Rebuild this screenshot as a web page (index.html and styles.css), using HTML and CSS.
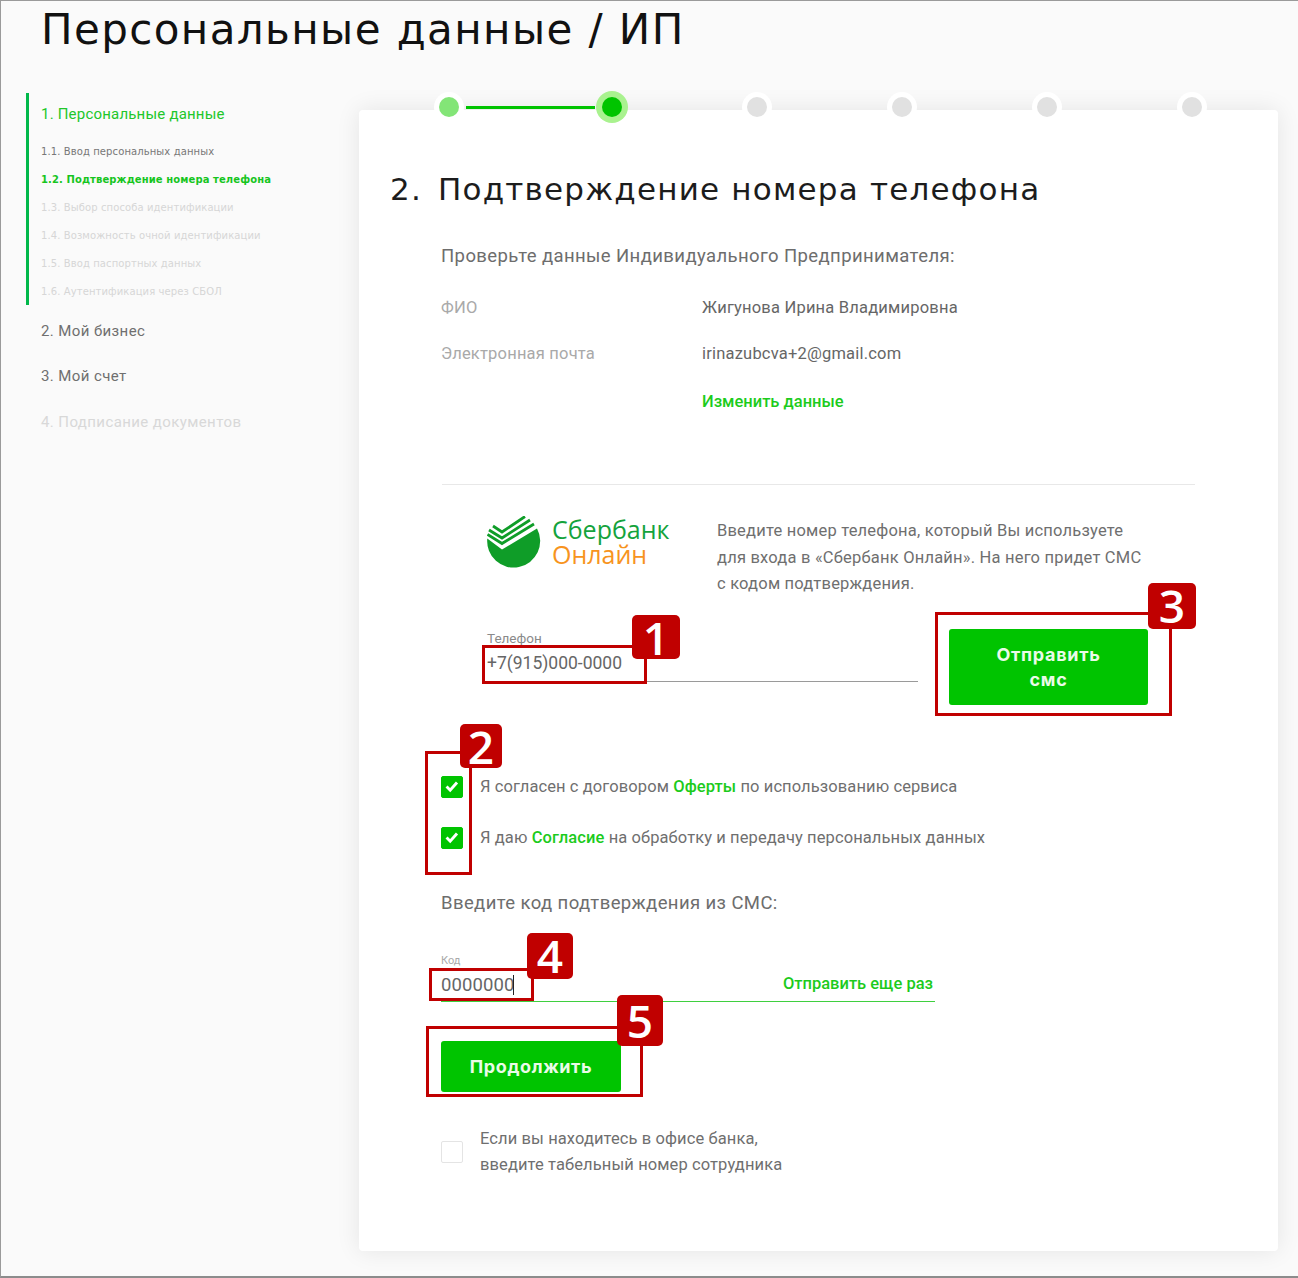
FILE: index.html
```html
<!DOCTYPE html>
<html lang="ru">
<head>
<meta charset="utf-8">
<title>Персональные данные / ИП</title>
<link rel="stylesheet" href="styles.css">
</head>
<body>
<div class="page">
  <h1 class="title">Персональные данные / ИП</h1>
  <div class="layout">
    <aside class="side">
      <div class="side-group">
        <div class="side-head">1. Персональные данные</div>
        <ul class="side-list">
          <li class="side-done">1.1. Ввод персональных данных</li>
          <li class="side-active">1.2. Подтверждение номера телефона</li>
          <li>1.3. Выбор способа идентификации</li>
          <li>1.4. Возможность очной идентификации</li>
          <li>1.5. Ввод паспортных данных</li>
          <li>1.6. Аутентификация через СБОЛ</li>
        </ul>
      </div>
      <div class="side-main side-m1">2. Мой бизнес</div>
      <div class="side-main side-m2">3. Мой счет</div>
      <div class="side-main side-m3">4. Подписание документов</div>
    </aside>

    <main class="card">
      <div class="stepper">
        <span class="dot dot-done"></span>
        <span class="link link-on"></span>
        <span class="dot dot-now"></span>
        <span class="link"></span>
        <span class="dot"></span>
        <span class="link"></span>
        <span class="dot"></span>
        <span class="link"></span>
        <span class="dot"></span>
        <span class="link"></span>
        <span class="dot"></span>
      </div>

      <h2 class="card-title"><span class="card-num">2.</span>Подтверждение номера телефона</h2>

      <div class="body">
        <p class="lead">Проверьте данные Индивидуального Предпринимателя:</p>
        <dl class="facts">
          <dt>ФИО</dt><dd>Жигунова Ирина Владимировна</dd>
          <dt>Электронная почта</dt><dd>irinazubcva+2@gmail.com</dd>
          <dt></dt><dd><a class="change">Изменить данные</a></dd>
        </dl>
        <hr class="rule">

        <div class="sber">
          <div class="logo">
            <svg class="logo-mark" width="56" height="52" viewBox="5 6 56 52">
              <path d="M5.300 28.500 20 39.500 55 18.500A26.500 26.500 0 1 1 5.300 28.500Z" fill="#0f9d28"/>
              <path d="M5.500 24.500 20 33.500 52 14" fill="none" stroke="#0f9d28" stroke-width="2.800"/>
              <path d="M7 20 20 28 48 10" fill="none" stroke="#0f9d28" stroke-width="2.800"/>
              <path d="M11 16 20 22 43 6.500" fill="none" stroke="#0f9d28" stroke-width="2.800"/>
            </svg>
            <div class="logo-text"><span class="logo-a">Сбербанк</span><span class="logo-b">Онлайн</span></div>
          </div>
          <p class="sber-text">Введите номер телефона, который Вы используете<br>для входа в «Сбербанк Онлайн». На него придет СМС<br>с кодом подтверждения.</p>
        </div>

        <div class="phone-row">
          <div class="field field-phone">
            <span class="field-label">Телефон</span>
            <span class="field-value phone-value">+7(915)000-0000</span>
          </div>
          <button class="btn btn-sms">Отправить<br>смс</button>
        </div>

        <div class="checks">
          <label class="check"><span class="box box-on"><svg width="22" height="22" viewBox="0 0 22 22"><path d="M5 10.500 9 14.500 16.500 6" fill="none" stroke="#fff" stroke-width="3.200"/></svg></span><span>Я согласен с договором <a class="lnk">Оферты</a> по использованию сервиса</span></label>
          <label class="check"><span class="box box-on"><svg width="22" height="22" viewBox="0 0 22 22"><path d="M5 10.500 9 14.500 16.500 6" fill="none" stroke="#fff" stroke-width="3.200"/></svg></span><span>Я даю <a class="lnk">Согласие</a> на обработку и передачу персональных данных</span></label>
        </div>

        <p class="lead code-lead">Введите код подтверждения из СМС:</p>

        <div class="field field-code">
          <span class="field-label label-small">Код</span>
          <div class="code-row">
            <span class="field-value code-value">0000000<span class="caret"></span></span>
            <a class="resend">Отправить еще раз</a>
          </div>
        </div>

        <button class="btn btn-next">Продолжить</button>

        <label class="check office"><span class="box"></span><span>Если вы находитесь в офисе банка,<br>введите табельный номер сотрудника</span></label>
      </div>
    </main>
  </div>

  <div class="mark mark-1"></div>
  <div class="mark mark-2"></div>
  <div class="mark mark-3"></div>
  <div class="mark mark-4"></div>
  <div class="mark mark-5"></div>
  <div class="badge badge-1">1</div>
  <div class="badge badge-2">2</div>
  <div class="badge badge-3">3</div>
  <div class="badge badge-4">4</div>
  <div class="badge badge-5">5</div>
</div>
</body>
</html>
```

FILE: styles.css
```css
* { box-sizing: border-box; }
html, body { margin: 0; padding: 0; }
body { font-family: Roboto, "Liberation Sans", sans-serif; color: #6f6f6f; background: #fff; }
p, h1, h2, dl, dd, dt, ul { margin: 0; padding: 0; }

.page {
  position: relative;
  width: 1298px;
  height: 1278px;
  overflow: hidden;
  background: #fafafa;
  border-top: 1px solid #9a9a9a;
  border-left: 1px solid #9a9a9a;
  border-bottom: 2px solid #8c8c8c;
  padding: 0 20px 0 25px;
}

.title {
  font-family: "DejaVu Sans", sans-serif;
  font-weight: 400;
  font-size: 42px;
  line-height: 58px;
  letter-spacing: 1.4px;
  color: #111;
  margin-left: 15px;
  white-space: nowrap;
}

.layout { display: flex; margin-top: 34px; }

.side { width: 333px; flex: none; }
.side-group { border-left: 3px solid #00b84a; height: 212px; padding: 10px 0 0 12px; }
.side-head { font-size: 15px; line-height: 22px; color: #21c72a; letter-spacing: .2px; }
.side-list { list-style: none; margin-top: 13px; font-family: "DejaVu Sans", sans-serif; font-size: 10px; line-height: 28px; color: #d6d6d6; white-space: nowrap; letter-spacing: .1px; }
.side-done { color: #777; }
.side-active { color: #16c51e; font-weight: 600; }
.side-main { padding-left: 15px; font-size: 15px; line-height: 22px; letter-spacing: .4px; color: #6f6f6f; }
.side-m1 { margin-top: 15px; }
.side-m2 { margin-top: 23px; }
.side-m3 { margin-top: 24px; color: #d8d8d8; }

.card {
  position: relative;
  width: 919px;
  height: 1141px;
  margin-top: 17px;
  background: #fff;
  border-radius: 4px;
  box-shadow: 0 0 24px rgba(0, 0, 0, .09);
  padding: 57px 0 0 31px;
}

.stepper {
  position: absolute;
  top: -18px;
  left: 82px;
  width: 759px;
  display: flex;
  align-items: center;
  height: 30px;
}
.dot {
  flex: none;
  width: 20px;
  height: 20px;
  margin: 0 -2px;
  position: relative;
  z-index: 1;
  border-radius: 50%;
  background: #e1e1e1;
  box-shadow: 0 0 0 5px #fff;
}
.dot-done { background: #83e577; }
.dot-now { background: #00c400; box-shadow: 0 0 0 6px #a9f28f; }
.link { flex: 1; height: 3px; }
.link-on { background: #00c400; margin: 0 9px; }

.card-title { font-family: "DejaVu Sans", sans-serif; font-weight: 400; font-size: 31px; line-height: 44px; color: #1c1c1c; letter-spacing: 1.2px; display: flex; white-space: nowrap; }
.card-num { width: 48px; flex: none; }

.body { padding-left: 51px; }
.lead { font-size: 18.500px; line-height: 26px; margin-top: 32px; letter-spacing: .4px; color: #6d6d6d; white-space: nowrap; }

.facts { display: grid; grid-template-columns: 261px 1fr; margin-top: 26px; font-size: 16.500px; line-height: 26px; row-gap: 20px; letter-spacing: .2px; }
.facts dt { color: #a9a9a9; }
.facts dd { color: #666; white-space: nowrap; }
.change { color: #1ccb1c; font-weight: 500; letter-spacing: 0; }
.facts dd:last-child { margin-top: 2px; }

.rule { border: 0; border-top: 1px solid #e8e8e8; margin: 69px 0 0 1px; width: 753px; }

.sber { display: flex; padding-left: 46px; margin-top: 34px; }
.logo { width: 230px; display: flex; align-items: flex-start; flex: none; }
.logo-mark { flex: none; margin: -3px 9px 0 0; }
.logo-text { display: flex; flex-direction: column; font-family: "Open Sans", sans-serif; font-size: 25px; line-height: 25px; margin-top: -2px; }
.logo-a { color: #14a33c; }
.logo-b { color: #f7941e; }
.sber-text { font-size: 16.500px; line-height: 26.500px; letter-spacing: .2px; color: #6f6f6f; white-space: nowrap; margin-top: -1px; }

.phone-row { display: flex; align-items: flex-start; padding-left: 46px; margin-top: 31px; }
.field { display: flex; flex-direction: column; }
.field-phone { width: 431px; height: 53px; border-bottom: 1px solid #9a9a9a; }
.field-label { font-size: 13.500px; line-height: 18px; color: #8a8a8a; }
.field-value { font-size: 18.500px; line-height: 26px; color: #666; }
.phone-value { font-size: 17.500px; margin-top: 3px; }
.btn { display: block; border: 0; border-radius: 3px; background: #00c400; color: #eafbe8; font-family: Inter, sans-serif; font-weight: 700; text-align: center; padding: 0; }
.btn-sms { width: 199px; height: 76px; margin-left: 31px; font-size: 18px; line-height: 25px; letter-spacing: .7px; }

.checks { margin-top: 69px; display: flex; flex-direction: column; row-gap: 25px; }
.check { display: flex; align-items: center; font-size: 16.500px; line-height: 26px; letter-spacing: .1px; color: #6f6f6f; white-space: nowrap; }
.box { flex: none; width: 22px; height: 22px; margin-right: 17px; border-radius: 2px; border: 1px solid #e4e4e4; background: #fff; display: flex; align-items: center; justify-content: center; }
.box-on { background: #00c400; border-color: #00c400; }
.lnk { color: #1ccb1c; font-weight: 500; }

.code-lead { margin-top: 39px; }
.field-code { width: 494px; height: 47px; border-bottom: 1px solid #3fcf3f; margin-top: 39px; }
.label-small { font-size: 11px; line-height: 12px; color: #aaa; }
.code-row { display: flex; justify-content: space-between; margin-top: 5px; padding-right: 2px; }
.code-value { letter-spacing: .1px; }
.caret { display: inline-block; width: 1px; height: 20px; margin-left: -1px; background: #222; vertical-align: -4px; }
.resend { font-size: 16.500px; line-height: 24px; color: #1ccb1c; font-weight: 500; }

.btn-next { width: 180px; height: 51px; margin-top: 39px; font-size: 18px; letter-spacing: .6px; }
.office { margin-top: 34px; line-height: 26.500px; }

.mark { position: absolute; border: 3px solid #c00000; }
.mark-1 { left: 481px; top: 644px; width: 165px; height: 39px; }
.mark-2 { left: 424px; top: 750px; width: 47px; height: 124px; }
.mark-3 { left: 934px; top: 611px; width: 237px; height: 104px; }
.mark-4 { left: 428px; top: 967px; width: 105px; height: 33px; }
.mark-5 { left: 425px; top: 1025px; width: 217px; height: 71px; }

.badge {
  position: absolute;
  border-radius: 5px;
  background: #c00000;
  color: #fff;
  font-family: "Open Sans", sans-serif;
  font-weight: 600;
  font-size: 46px;
  line-height: 44px;
  text-align: center;
}
.badge-1 { left: 631px; top: 614px; width: 48px; height: 44px; }
.badge-2 { left: 459px; top: 723px; width: 42px; height: 44px; }
.badge-3 { left: 1147px; top: 582px; width: 48px; height: 46px; }
.badge-4 { left: 526px; top: 932px; width: 46px; height: 46px; }
.badge-5 { left: 616px; top: 994px; width: 46px; height: 51px; line-height: 50px; }
```
